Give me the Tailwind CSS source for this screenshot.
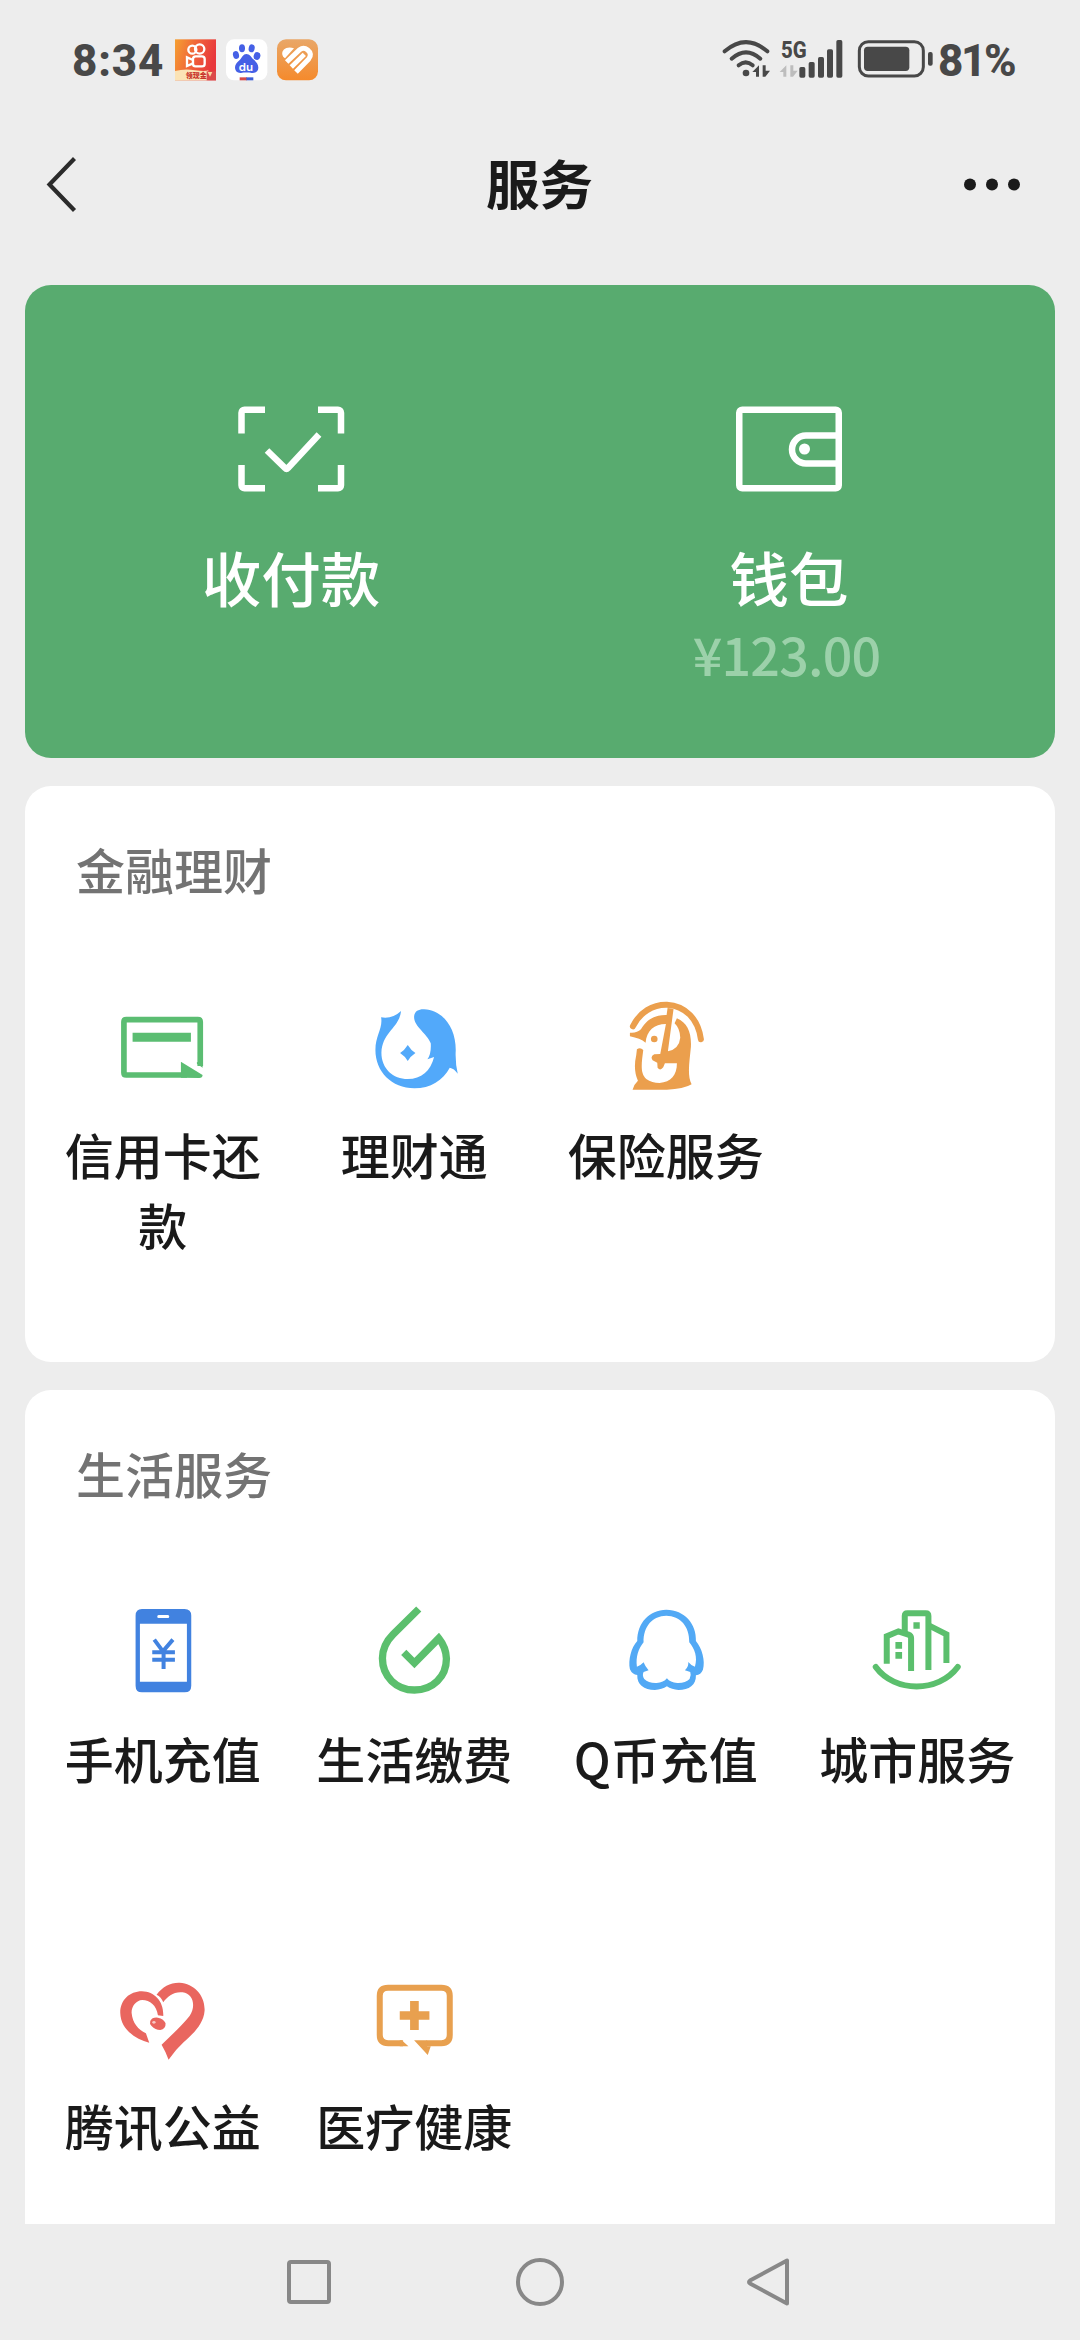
<!DOCTYPE html>
<html lang="zh-CN">
<head>
<meta charset="utf-8">
<title>服务</title>
<script src="https://cdn.jsdelivr.net/npm/@tailwindcss/browser@4"></script>
</head>
<body class="bg-[#ededed]">
<div class="flex h-[2340px] w-[1080px] flex-col overflow-hidden bg-[#ededed] font-['Noto_Sans_CJK_SC',sans-serif] font-medium text-[#1a1a1a]">

  <!-- Status bar -->
  <header class="flex h-[120px] shrink-0 items-center justify-between pr-[62px] pl-[72px] text-[#484848]">
    <div class="flex items-center">
      <span class="w-[103px] pt-px font-['Roboto',sans-serif] text-[44px] leading-[50px] font-extrabold tracking-[0.8px]">8:34</span>
      <svg class="h-[50px] w-[147px]" viewBox="405 47 441 150">
        <defs>
          <linearGradient id="ks" x1="0" y1="0" x2="1" y2="0.3"><stop offset="0" stop-color="#f5a031"/><stop offset="0.55" stop-color="#f0603a"/><stop offset="1" stop-color="#e8373c"/></linearGradient>
          <linearGradient id="or" x1="0" y1="0" x2="0" y2="1"><stop offset="0" stop-color="#e9a768"/><stop offset="1" stop-color="#f58a2c"/></linearGradient>
        </defs>
        <rect x="405" y="60" width="123" height="123" fill="url(#ks)"/>
        <g fill="none" stroke="#fff" stroke-width="7">
          <circle cx="457" cy="91" r="12"/><circle cx="479" cy="89" r="14"/>
          <rect x="459" y="111" width="35" height="30" rx="8"/><path d="M459 122l-18-8v26l18-8"/>
        </g>
        <path d="M405 155q30-8 60-2 30 4 40 0v30h-100z" fill="#fbe3b5"/>
        <rect x="500" y="156" width="28" height="27" fill="#dc4a4a"/><path d="M503 158h14l-7 14z" fill="#f9d9a0"/>
        <text x="437" y="176" font-size="21" font-weight="900" fill="#c8342c">领现金</text>
        <rect x="558" y="60" width="124" height="123" rx="24" fill="#fff"/>
        <g fill="#4560e6">
          <ellipse cx="588" cy="107" rx="9" ry="12" transform="rotate(-15 588 107)"/><ellipse cx="606" cy="87" rx="9" ry="12"/><ellipse cx="635" cy="87" rx="9" ry="12" transform="rotate(12 635 87)"/><ellipse cx="651" cy="110" rx="10" ry="12" transform="rotate(15 651 110)"/>
          <path d="M619 104c10 0 14 9 21 16 9 8 15 15 15 25 0 11-9 17-20 16-8-2-23-2-32 0-11 1-18-6-18-17 0-10 7-16 15-23 7-7 9-17 19-17z"/>
        </g>
        <text x="596" y="154" font-size="32" font-family="Inter" font-weight="600" fill="#fff" textLength="43" lengthAdjust="spacingAndGlyphs">du</text>
        <path d="M599 174h22v9h-22z" fill="#d54a4a"/><path d="M619 174h21v9h-21z" fill="#3e5ed6"/>
        <rect x="711" y="60" width="123" height="123" rx="27" fill="url(#or)"/>
        <g fill="none" stroke="#fff">
          <path d="M727 106C724 90 742 79 762 87L735 117Q728 112 727 106Z" fill="#fff" stroke="none"/>
          <path d="M740 128L779 91Q791 82 803 92Q818 104 806 119L768 158" stroke-width="15"/>
          <path d="M754 143L793 105" stroke-width="14"/>
        </g>
      </svg>
    </div>
    <div class="flex items-center">
      <svg class="h-[50px] w-[216px]" viewBox="60 47 648 150">
        <g fill="none" stroke="#484848" stroke-width="12" stroke-linecap="round">
          <path d="M71 96q64-55 128 0"/><path d="M92 118q43-38 86 0"/><path d="M113 138q21-18 42 0"/>
        </g>
        <circle cx="135" cy="161" r="10" fill="#484848"/>
        <path d="M174 138v34h-9v-14h-11zM185 138v34h8l14-18h-13v-16z" fill="#484848"/>
        <path d="M256 138v34h-9v-14h-11zM268 138v34h8l14-18h-13v-16z" fill="#bdbdbd"/>
        <text x="240" y="115" font-family="Roboto" font-weight="800" font-size="72" fill="#484848" textLength="77" lengthAdjust="spacingAndGlyphs">5G</text>
        <g fill="#484848"><rect x="295" y="143" width="18" height="32" rx="5"/><rect x="323" y="128" width="18" height="47" rx="5"/><rect x="351" y="113" width="18" height="62" rx="5"/><rect x="378" y="90" width="18" height="85" rx="5"/><rect x="406" y="62" width="18" height="113" rx="5"/></g>
        <rect x="475" y="67" width="192" height="103" rx="27" fill="none" stroke="#484848" stroke-width="9"/>
        <rect x="489" y="82" width="136" height="73" rx="11" fill="#484848"/>
        <rect x="681" y="98" width="14" height="41" rx="6" fill="#484848"/>
      </svg>
      <span class="ml-px w-[80px] pt-px font-['Roboto',sans-serif] text-[44px] leading-[50px] font-extrabold tracking-[-2.4px]">81%</span>
    </div>
  </header>

  <!-- Title bar -->
  <div class="grid h-[130px] shrink-0 grid-cols-[1fr_auto_1fr] items-center pr-[58px] pl-[44px]">
    <svg class="h-[60px] w-[60px]" viewBox="0 0 60 60" fill="none" stroke="#2b2b2b" stroke-width="4.2"><path d="M30.500 3.500L5.500 29.500L30.500 55.500"/></svg>
    <h1 class="-mt-[6px] pl-[13px] text-[53.500px] leading-[60px] font-semibold">服务</h1>
    <svg class="h-[20px] w-[60px] justify-self-end" viewBox="-1 0 60 20" fill="#1a1a1a"><circle cx="7" cy="9.500" r="6"/><circle cx="29" cy="9.500" r="6"/><circle cx="51" cy="9.500" r="6"/></svg>
  </div>

  <main class="mt-[35px] flex h-[1939px] shrink-0 flex-col gap-7 overflow-hidden px-[25px]">
    <!-- Payment card -->
    <section class="grid h-[473px] shrink-0 grid-cols-2 rounded-[26px] bg-[#58ab6f] px-[17px] pt-[116px] text-white">
      <div class="flex flex-col items-center">
        <svg class="h-[96px] w-[120px]" viewBox="0 0 120 96" fill="none" stroke="#fff" stroke-width="6.500">
          <path d="M34 8.750H13.500a3 3 0 0 0-3 3V32.500M87 8.750H107a3 3 0 0 1 3 3V32.500M34 87.250H13.500a3 3 0 0 1-3-3V64M87 87.250H107a3 3 0 0 0 3-3V64"/>
          <path d="M36 49.500L54 67Q55.500 68.500 57 67L88 33.500"/>
        </svg>
        <span class="mt-[44px] text-[59.500px] leading-[70px]">收付款</span>
      </div>
      <div class="flex flex-col items-center">
        <svg class="h-[96px] w-[120px]" viewBox="0 0 120 96" fill="none" stroke="#fff" stroke-width="6.500">
          <rect x="10.250" y="8.750" width="99.500" height="78.500" rx="3"/>
          <path d="M108 34.500H77a14 14 0 0 0 0 28H108"/>
          <circle cx="75.500" cy="48" r="5.500" fill="#fff" stroke="none"/>
        </svg>
        <span class="mt-[44px] text-[59.500px] leading-[70px]">钱包</span>
        <span class="mt-[8px] -ml-[5px] text-[52px] leading-[70px] tracking-[-0.8px] text-[#9cd1aa]">¥123.00</span>
      </div>
    </section>

    <!-- Finance -->
    <section class="h-[576px] shrink-0 rounded-[26px] bg-white px-3 pt-[47px]">
      <h2 class="pl-[39px] text-[49px] leading-[72px] text-[#737373]">金融理财</h2>
      <div class="mt-[95px] grid grid-cols-4 text-center text-[49px] leading-[70px]">
        <div class="flex flex-col items-center gap-[23px]">
          <svg class="size-[96px]" viewBox="74.250 60 288 288">
            <path d="M330 258V126q0-7-7-7H108q-7 0-7 7v152q0 7 7 7H290" fill="none" stroke="#5bbd72" stroke-width="17"/>
            <path d="M320 245l17 12v6l-17-12zM127 158H302V185H127zM272 293V245L337 285q0 9-10 9z" fill="#5bbd72"/>
          </svg>
          <span class="w-[200px]">信用卡还款</span>
        </div>
        <div class="flex flex-col items-center gap-[23px]">
          <svg class="size-[96px]" viewBox="828.750 60 288 288" fill="#52a9fa">
            <path d="M934 93C928 145 878 155 875 218C875 266 910 297 954 297C995 297 1022 274 1033 231L1013 238Q1025 221 1023 190C1012 160 972 140 973 110C974 92 990 87 1003 88C1058 91 1098 140 1098 210Q1096 248 1104 281Q1093 265 1080 263C1060 300 1022 325 974 325C905 324 857 275 857 210C857 165 880 145 874 112Q907 118 934 93Z"/>
            <path d="M954 195Q963 210 977 219Q963 228 954 243Q945 228 931 219Q945 210 954 195Z"/>
          </svg>
          <span>理财通</span>
        </div>
        <div class="flex flex-col items-center gap-[23px]">
          <svg class="size-[96px]" viewBox="173.250 60 288 288">
            <path d="M218 139C238 97 278 73 320 74C375 77 414 117 422 178" fill="none" stroke="#eb9f4d" stroke-width="18" stroke-linecap="round"/>
            <path d="M322 84L340 86L323 214Q357 206 360 173Q359 145 343 130L350 115C381 128 394 158 392 200C388 245 380 285 394 313Q370 328 320 329H217Q221 313 233 302Q218 270 228 225L230 208Q240 200 249 210C244 250 239 280 258 297Q275 309 298 309C332 307 350 286 350 250H314L309 262Q300 274 292 263L291 248L277 241Q269 229 282 223L300 222L317 132C282 132 259 152 256 188Q240 175 209 169V158Q230 160 242 148C258 120 283 104 319 105Z" fill="#eb9f4d"/>
            <circle cx="282" cy="177" r="10" fill="#eb9f4d"/>
          </svg>
          <span>保险服务</span>
        </div>
      </div>
    </section>

    <!-- Life services -->
    <section class="h-[900px] shrink-0 rounded-t-[26px] bg-white px-3 pt-[47px]">
      <h2 class="pl-[39px] text-[49px] leading-[72px] text-[#737373]">生活服务</h2>
      <div class="mt-[95px] grid grid-cols-4 gap-y-[178px] text-center text-[49px] leading-[70px]">
        <div class="flex flex-col items-center gap-[23px]">
          <svg class="size-[96px]" viewBox="164.250 42 288 288">
            <path fill-rule="evenodd" d="M245 57H373Q393 57 393 77V287Q393 307 373 307H245Q226 307 226 287V77Q226 57 245 57ZM239 101V275H380V101ZM295 75Q291 75 291 79.500Q291 84 295 84H323Q327 84 327 79.500Q327 75 323 75Z" fill="#4182e0"/>
            <path d="M282 149L308 184L338 149M276 187H344M276 209H344M310 183V237" fill="none" stroke="#4182e0" stroke-width="12"/>
          </svg>
          <span>手机充值</span>
        </div>
        <div class="flex flex-col items-center gap-[23px]">
          <svg class="size-[96px]" viewBox="918.750 42 288 288" fill="none" stroke="#5bbf6d" stroke-width="22">
            <path d="M1077 57L1000 133C982 151 968 175 968 205C968 260 1010 300 1064 300C1119 300 1160 260 1160 206Q1159 172 1137 145L1064 219L1032 187"/>
          </svg>
          <span>生活缴费</span>
        </div>
        <div class="flex flex-col items-center gap-[23px]">
          <svg class="size-[96px]" viewBox="173.250 42 288 288">
            <path fill-rule="evenodd" fill="#52a9f5" d="M318 59C373 60 409 101 407 153C425 174 436 213 428 239Q422 254 407 256C408 286 386 300 355 300Q334 299 320 289Q305 299 284 300C251 299 230 285 231 255Q216 254 209 238C203 211 213 172 231 153C231 98 267 60 318 59ZM318 77C277 78 249 108 250 157C235 176 226 200 230 230Q240 228 250 217Q254 228 265 241L250 246Q245 256 252 267Q265 280 289 279Q310 278 320 265Q330 278 351 279Q375 280 388 267Q394 256 390 246L374 241Q386 230 384 216Q394 228 404 230C413 202 403 176 387 157C388 108 360 78 318 77Z"/>
          </svg>
          <span>Q币充值</span>
        </div>
        <div class="flex flex-col items-center gap-[23px]">
          <svg class="size-[96px]" viewBox="927.750 42 288 288" fill="none" stroke="#5bbf6d" stroke-width="18">
            <path d="M948 231C1005 309 1136 309 1194 231" stroke-linecap="round"/>
            <path d="M981 221V139L1016 124L1046 134Q1054 137 1054 145V243"/>
            <path d="M1035 132V78Q1035 70 1043 70H1098Q1106 70 1106 78V240"/>
            <path d="M1107 106L1160 133V219"/>
            <path d="M1061 97h19v19h-19zM1007 156h20v20h-20zM1007 186h20v20h-20z" fill="#5bbf6d" stroke="none"/>
          </svg>
          <span>城市服务</span>
        </div>
        <div class="flex flex-col items-center gap-[23px]">
          <svg class="size-[96px]" viewBox="164.250 33 288 288" fill="#e9665f">
            <path d="M289 104C306 80 332 67 358 68C402 71 435 106 433 152C430 194 395 224 370 247Q345 270 325 299Q317 276 304 254C335 224 365 197 388 168C408 137 399 102 367 97C341 94 322 109 309 127Q303 111 289 104Z"/>
            <path d="M267 248C226 238 181 208 180 158C180 120 208 94 245 94C284 95 311 125 309 168L293 166C289 136 269 120 246 120C228 121 214 138 214 158C217 190 234 208 257 220Z"/>
            <path d="M270 183Q276 171 293 173Q311 177 316 190Q317 207 300 210Q285 210 274 198Q267 191 270 183Z"/>
            <ellipse cx="281" cy="187" rx="5" ry="4" fill="#f8c9c5"/>
          </svg>
          <span>腾讯公益</span>
        </div>
        <div class="flex flex-col items-center gap-[23px]">
          <svg class="size-[96px]" viewBox="918.750 33 288 288">
            <path d="M1030 249.500H985Q960 249.500 960 225V107Q960 83 985 83H1145Q1170 83 1170 107V225Q1170 249.500 1145 249.500H1100" fill="none" stroke="#e8a04f" stroke-width="18"/>
            <path d="M1026 240.500L1046 258.500H1020V240.500ZM1063 240.500H1102V258.500H1113L1104 285ZM1051 123H1077V154H1109V179H1077V210H1051V179H1020V154H1051Z" fill="#e8a04f"/>
          </svg>
          <span>医疗健康</span>
        </div>
      </div>
    </section>
  </main>

  <!-- System navigation -->
  <nav class="flex h-[116px] shrink-0 items-center justify-center gap-[180px]">
    <svg class="size-[50px]" viewBox="0 0 50 50" fill="none" stroke="#888" stroke-width="4"><rect x="4" y="5" width="40" height="40" rx="2"/></svg>
    <svg class="size-[50px]" viewBox="0 0 50 50" fill="none" stroke="#888" stroke-width="4"><circle cx="25" cy="25" r="22"/></svg>
    <svg class="size-[50px]" viewBox="0 0 50 50" fill="none" stroke="#888" stroke-width="4" stroke-linejoin="round"><path d="M42 3.500V46.500L5 26.500Q3 25 5 23.500Z"/></svg>
  </nav>
</div>
</body>
</html>
